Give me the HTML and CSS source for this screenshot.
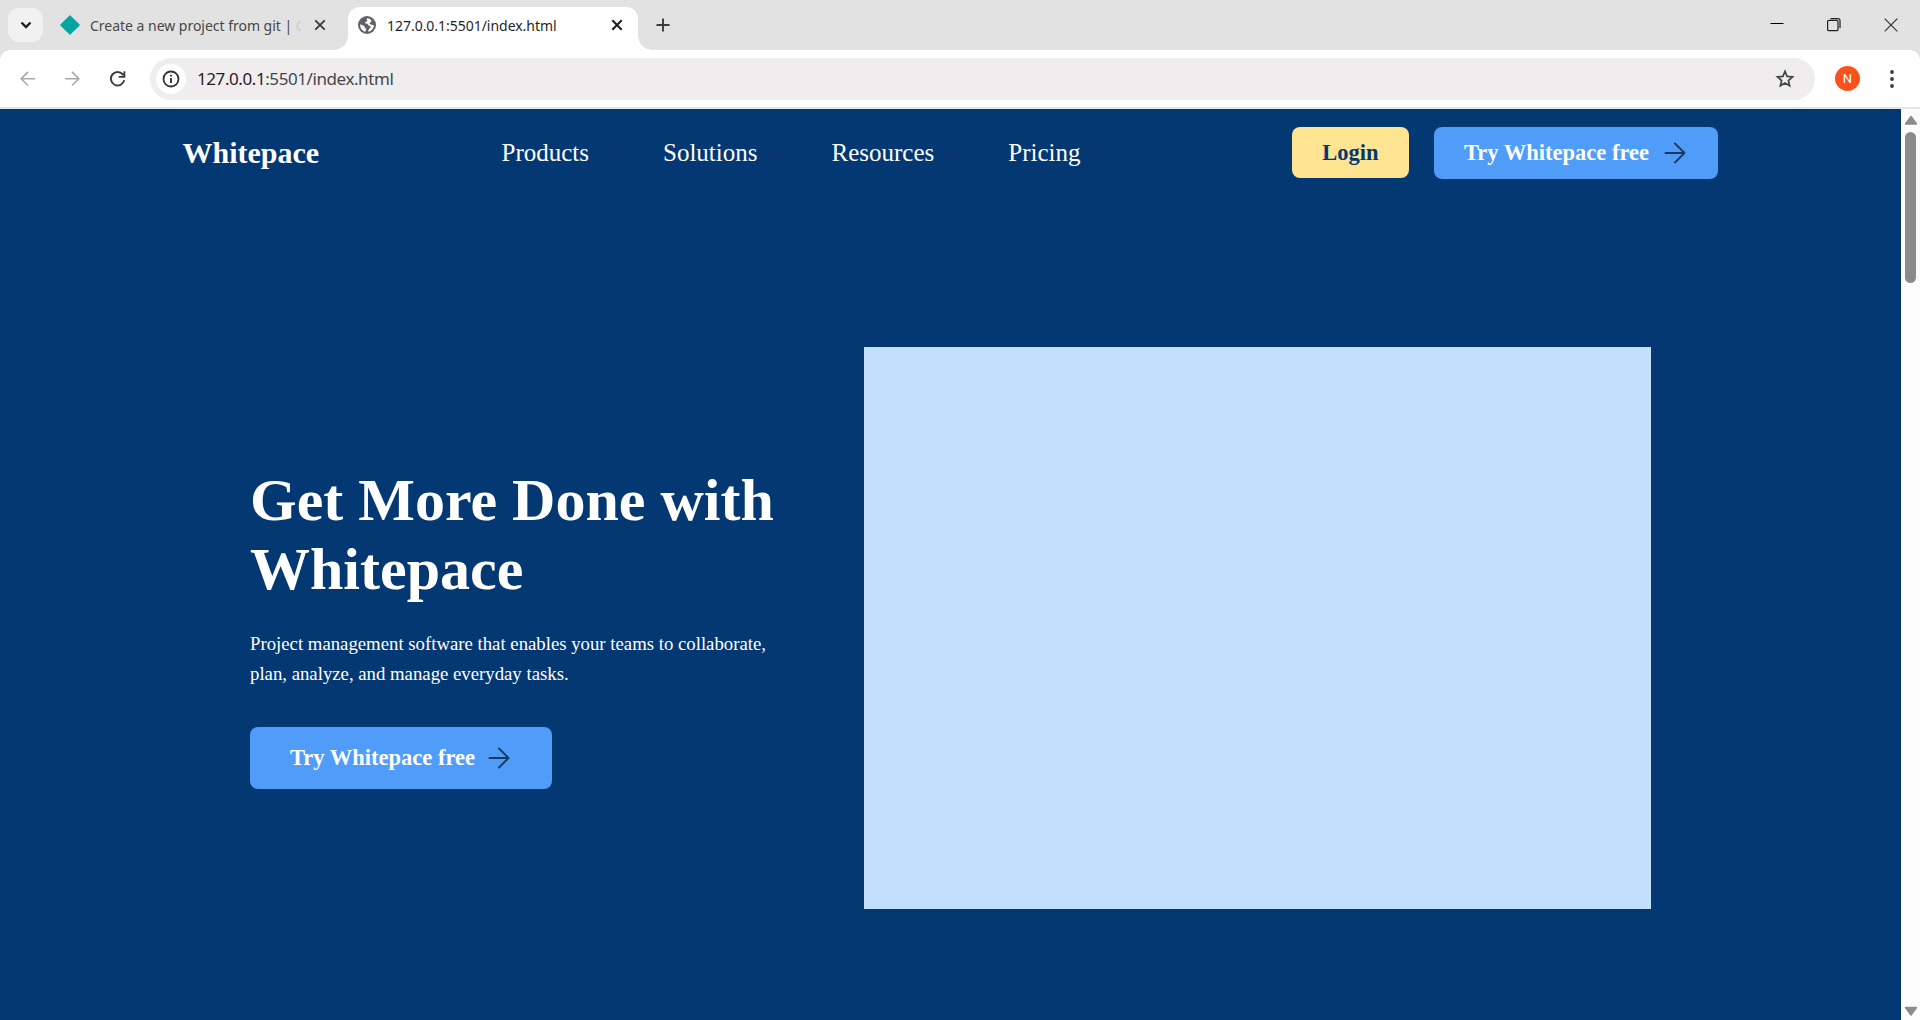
FILE: index.html
```html
<!DOCTYPE html>
<html lang="en">
<head>
<meta charset="utf-8">
<title>127.0.0.1:5501/index.html</title>
<link rel="stylesheet" href="styles.css">
</head>
<body>
<div class="browser">
  <div class="tabstrip">
    <div class="tab-search"><svg width="12" height="8" viewBox="0 0 12 8"><path d="M1.500 1.500 6 6l4.500-4.500" fill="none" stroke="#1f1f1f" stroke-width="2.300"/></svg></div>
    <div class="tab tab-idle">
      <svg class="favicon" width="20" height="20" viewBox="0 0 20 20"><path d="M10 .8 19.200 10 10 19.200 .8 10z" fill="#05a5a3" stroke="#05a5a3" stroke-width="1.200" stroke-linejoin="round"/></svg>
      <span class="tab-title">Create a new project from git | <i>C</i></span>
      <svg class="tab-close" width="12" height="12" viewBox="0 0 12 12"><path d="M1.300 1.300l9.400 9.400M10.700 1.300l-9.400 9.400" stroke="#3c3c3c" stroke-width="1.900"/></svg>
    </div>
    <div class="tab tab-active">
      <svg class="favicon" width="18" height="18" viewBox="0 0 18 18"><circle cx="9" cy="9" r="9" fill="#5f6368"/><path d="M9.200 2.200C8.600 3 8.700 3.800 9.500 4.300 8.900 5.800 7.200 5.500 6.900 7.300 8.600 7.600 10.300 7.500 10.400 9.400 12 9.300 13 10.200 12.700 11.400 11.500 11.900 10.900 13.500 9.800 15.500 13.600 15.400 15.900 12.400 15.900 9.200 14 8.600 12.500 9 11.500 7.500 11.700 6.400 13.600 6.600 13.300 4.300 12.400 2.900 10.800 2.200 9.200 2.200zM2.100 8.300C1.900 12 4.300 15.200 7.500 15.800 7.300 14.500 8.300 13.900 8.200 12.800 6.400 12.400 6.900 10.500 5.800 9.800 4.700 9.200 3.400 9.200 2.100 8.300z" fill="#fff"/></svg>
      <span class="tab-title">127.0.0.1:5501/index.html</span>
      <svg class="tab-close" width="12" height="12" viewBox="0 0 12 12"><path d="M1.300 1.300l9.400 9.400M10.700 1.300l-9.400 9.400" stroke="#1f1f1f" stroke-width="2.100"/></svg>
    </div>
    <svg class="new-tab" width="14" height="14" viewBox="0 0 14 14"><path d="M7 .5v13M.5 7h13" stroke="#3c3c3c" stroke-width="1.900"/></svg>
    <div class="window-controls">
      <svg width="14" height="14" viewBox="0 0 14 14"><path d="M.5 5.500h13" stroke="#000"/></svg>
      <svg width="14" height="14" viewBox="0 0 14 14"><path d="M3.500.7H11a2 2 0 0 1 2 2v7.500" fill="none" stroke="#222" stroke-width="1.200"/><rect x=".6" y="2.300" width="10.400" height="10.400" rx="1.300" fill="none" stroke="#222" stroke-width="1.200"/></svg>
      <svg width="14" height="14" viewBox="0 0 14 14"><path d="M.7.700l12.600 12.600M13.300.700.700 13.300" stroke="#333" stroke-width="1.200"/></svg>
    </div>
  </div>
  <div class="toolbar">
    <div class="nav-icons">
      <svg width="16" height="16" viewBox="0 0 16 16"><path d="M15 7.700H1.500M8 .9 1.200 7.700 8 14.500" fill="none" stroke="#a9a9a9" stroke-width="1.600"/></svg>
      <svg width="16" height="16" viewBox="0 0 16 16"><path d="M0 7.700H13.500M7 .9l6.800 6.800L7 14.500" fill="none" stroke="#a9a9a9" stroke-width="1.600"/></svg>
      <svg width="16" height="16" viewBox="0 0 16 16"><path d="M13.300 4.200A6.700 6.700 0 1 0 14.200 9.100M14.400.2v5.700H8.700" fill="none" stroke="#3c3c3c" stroke-width="1.900"/></svg>
    </div>
    <div class="omnibox">
      <div class="site-info"><svg width="18" height="18" viewBox="0 0 18 18"><circle cx="9" cy="9" r="7.500" fill="none" stroke="#333" stroke-width="1.800"/><path d="M9 8v5M9 4.700v1.900" stroke="#333" stroke-width="1.900"/></svg></div>
      <span class="url"><b>127.0.0.1</b>:5501/index.html</span>
      <svg class="star" width="20" height="20" viewBox="0 0 20 20"><path d="m10 2.400 2.100 5 5.400.5-4.100 3.600 1.200 5.300L10 14l-4.600 2.800 1.200-5.300-4.100-3.600 5.400-.5z" fill="none" stroke="#444" stroke-width="1.700"/></svg>
    </div>
    <div class="avatar">N</div>
    <svg class="menu" width="4" height="20" viewBox="0 0 4 20"><g fill="#3c3c3c"><circle cx="2" cy="3" r="1.900"/><circle cx="2" cy="10" r="1.900"/><circle cx="2" cy="17" r="1.900"/></g></svg>
  </div>
  <div class="viewport">
    <div class="page">
      <header class="navbar">
        <div class="logo">Whitepace</div>
        <nav class="menu-links">
          <a>Products<svg class="chevron" width="16" height="9" viewBox="0 0 16 9"><path d="M.5.700 8 8.200 15.500.700"/></svg></a>
          <a>Solutions<svg class="chevron" width="16" height="9" viewBox="0 0 16 9"><path d="M.5.700 8 8.200 15.500.700"/></svg></a>
          <a>Resources<svg class="chevron" width="16" height="9" viewBox="0 0 16 9"><path d="M.5.700 8 8.200 15.500.700"/></svg></a>
          <a>Pricing<svg class="chevron" width="16" height="9" viewBox="0 0 16 9"><path d="M.5.700 8 8.200 15.500.700"/></svg></a>
        </nav>
        <div class="actions">
          <a class="btn btn-login">Login</a>
          <a class="btn btn-try">Try Whitepace free<svg class="arrow" width="22" height="22" viewBox="0 0 22 22"><path d="M1.500 11h19M11 1.500l9.500 9.500-9.500 9.500"/></svg></a>
        </div>
      </header>
      <main class="hero">
        <section class="hero-copy">
          <h1>Get More Done with Whitepace</h1>
          <p>Project management software that enables your teams to collaborate, plan, analyze, and manage everyday tasks.</p>
          <a class="btn btn-hero">Try Whitepace free<svg class="arrow" width="22" height="22" viewBox="0 0 22 22"><path d="M1.500 11h19M11 1.500l9.500 9.500-9.500 9.500"/></svg></a>
        </section>
        <div class="hero-image"></div>
      </main>
    </div>
    <div class="scrollbar">
      <svg width="14" height="11" viewBox="0 0 14 11"><path d="M7 2.500 12.500 10h-11z" fill="#8b8b8b" stroke="#8b8b8b" stroke-width="1.500" stroke-linejoin="round"/></svg>
      <div class="thumb"></div>
      <svg class="down" width="14" height="11" viewBox="0 0 14 11"><path d="M7 9 1.500 1.500h11z" fill="#8b8b8b" stroke="#8b8b8b" stroke-width="1.500" stroke-linejoin="round"/></svg>
    </div>
  </div>
</div>
</body>
</html>
```
FILE: styles.css
```css
* { box-sizing: border-box; }
body { margin: 0; overflow: hidden; font-family: "Liberation Serif", serif; }
svg { display: block; flex: none; }
.browser { width: 1920px; height: 1020px; display: flex; flex-direction: column; }

.tabstrip { height: 50px; flex: none; display: flex; background: #e2e2e2; font-family: "Noto Sans", sans-serif; font-size: 14px; }
.tab-search { width: 35px; height: 34px; margin: 8px 0 0 8px; border-radius: 11px; background: #f1f1f1; display: flex; align-items: center; justify-content: center; }
.tab { display: flex; align-items: center; white-space: nowrap; }
.tab-idle { width: 305px; height: 50px; padding-left: 17px; color: #474747; }
.tab-active { position: relative; width: 290px; height: 43px; margin-top: 7px; padding: 0 0 7px 10px; background: #fff; border-radius: 12px 12px 0 0; color: #1f1f1f; }
.tab-active::before, .tab-active::after { content: ""; position: absolute; bottom: 0; width: 14px; height: 14px; }
.tab-active::before { left: -14px; background: radial-gradient(circle at 0 0, transparent 13.5px, #fff 14px); }
.tab-active::after { right: -14px; background: radial-gradient(circle at 100% 0, transparent 13.5px, #fff 14px); }
.tab-title { margin-left: 10px; width: 215px; }
.tab-active .tab-title { margin-left: 11px; letter-spacing: -.03px; }
.tab-idle .tab-title { letter-spacing: -.02px; }
.tab-title i { display: inline-block; width: 5px; overflow: hidden; vertical-align: bottom; font-style: normal; color: #cdcdcd; }
.tab-close { margin-left: 9px; }
.new-tab { margin: 18px 0 0 18px; }
.window-controls { margin: 18px 22px 0 auto; display: flex; gap: 43px; }

.toolbar { height: 59px; flex: none; display: flex; align-items: flex-start; background: #fff; border-bottom: 2px solid #e4e6e5; }
.nav-icons { width: 150px; display: flex; gap: 29px; padding: 21px 0 0 20px; }
.omnibox { width: 1665px; height: 42px; margin-top: 8px; padding: 0 20px 0 6px; border-radius: 21px; background: #efedee; display: flex; align-items: center; }
.site-info { width: 30px; height: 30px; border-radius: 50%; background: #fff; display: flex; align-items: center; justify-content: center; }
.url { margin-left: 11px; font: 17px/24px "Noto Sans", sans-serif; letter-spacing: -.42px; color: #474747; }
.url b { font-weight: 400; color: #1f1f1f; }
.star { margin-left: auto; }
.avatar { width: 25px; height: 25px; margin: 16px 0 0 20px; border-radius: 50%; background: #f9521e; color: #fff; font: 13px/25px Roboto, sans-serif; text-align: center; }
.menu { margin: 19px 0 0 30px; }
.toolbar { background: radial-gradient(circle at 10px 10px, #fff 9.5px, #e2e2e2 10px) 0 0 / 10px 10px no-repeat, radial-gradient(circle at 0 10px, #fff 9.5px, #e2e2e2 10px) 100% 0 / 10px 10px no-repeat, #fff; }

.viewport { flex: 1; display: flex; }
.page { width: 1901px; background: #043873; color: #fff; }
.scrollbar { width: 19px; padding: 5px 0 3px; background: #fcfcfc; display: flex; flex-direction: column; align-items: center; }
.thumb { width: 11px; height: 151px; margin-top: 7px; border-radius: 6px; background: #8b8b8b; }
.down { margin-top: auto; }

.navbar { height: 88px; display: flex; align-items: center; padding: 0 183px 0 182.5px; }
.logo { width: 319px; font-size: 30px; font-weight: 700; }
.menu-links { display: flex; gap: 46px; font-size: 25px; }
.menu-links a { display: flex; align-items: center; gap: 12px; }
.chevron { fill: none; stroke: #16365f; stroke-width: 1.3; }
.actions { margin-left: auto; display: flex; align-items: flex-start; gap: 25px; }
.btn { display: flex; align-items: center; border-radius: 8px; font-size: 22.5px; font-weight: 700; white-space: nowrap; }
.btn-login { width: 117px; height: 51px; justify-content: center; background: #ffe492; color: #043873; }
.btn-try { width: 284px; height: 52px; padding-left: 30px; background: #4f9cf9; }
.btn-hero { width: 302px; height: 62px; padding-left: 40px; background: #4f9cf9; }
.arrow { margin-left: 15px; fill: none; stroke: #1b3a61; stroke-width: 1.9; stroke-linecap: round; stroke-linejoin: round; }
.btn-hero .arrow { margin-left: 13px; }

.hero { display: flex; align-items: center; justify-content: space-between; margin-top: 150px; padding: 0 250px; height: 562px; }
.hero-copy { width: 560px; padding-bottom: 1px; }
h1 { margin: 0; font-size: 60px; line-height: 69px; }
p { width: 530px; margin: 25px 0 38px; font-size: 18.75px; line-height: 30px; }
.hero-image { width: 787px; height: 562px; background: #c4defd; }
```
